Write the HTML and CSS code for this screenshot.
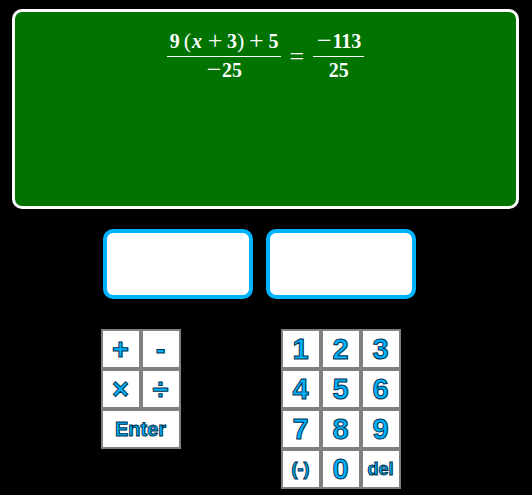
FILE: index.html
```html
<!DOCTYPE html>
<html lang="en">
<head>
<meta charset="utf-8">
<title>Equation practice</title>
<link rel="stylesheet" href="styles.css">
</head>
<body>
<main class="app">
  <section class="board" aria-label="Equation">
    <div class="equation">
      <span class="fraction">
        <span class="numerator">9<span class="paren open">(</span><i class="variable">x</i><span class="op">+</span>3<span class="paren">)</span><span class="op">+</span>5</span>
        <span class="denominator"><span class="sign">−</span>25</span>
      </span>
      <span class="equals">=</span>
      <span class="fraction">
        <span class="numerator"><span class="sign">−</span>113</span>
        <span class="denominator">25</span>
      </span>
    </div>
  </section>
  <div class="answers">
    <input class="answer" type="text" aria-label="Left side">
    <input class="answer" type="text" aria-label="Right side">
  </div>
  <div class="pads">
    <div class="pad operators">
      <button class="key" type="button">+</button>
      <button class="key" type="button">-</button>
      <button class="key" type="button">×</button>
      <button class="key" type="button">÷</button>
      <button class="key enter" type="button">Enter</button>
    </div>
    <div class="pad digits">
      <button class="key" type="button">1</button>
      <button class="key" type="button">2</button>
      <button class="key" type="button">3</button>
      <button class="key" type="button">4</button>
      <button class="key" type="button">5</button>
      <button class="key" type="button">6</button>
      <button class="key" type="button">7</button>
      <button class="key" type="button">8</button>
      <button class="key" type="button">9</button>
      <button class="key word" type="button">(-)</button>
      <button class="key" type="button">0</button>
      <button class="key word" type="button">del</button>
    </div>
  </div>
</main>
</body>
</html>
```
FILE: styles.css
```css
* {
  box-sizing: border-box;
}

body {
  margin: 0;
  background: #000;
  font-family: "Liberation Sans", Arial, sans-serif;
}

.app {
  padding: 9px 13px 6px 12px;
}

.board {
  min-height: 200px;
  padding: 17px 12px;
  border: 3px solid #fff;
  border-radius: 10px;
  background: #007300;
  color: #fff;
}

.equation {
  display: flex;
  justify-content: center;
  align-items: center;
  gap: 8px;
  font: bold 20px/24px "Liberation Serif", "Times New Roman", serif;
}

.fraction {
  display: flex;
  flex-direction: column;
  text-align: center;
}

.numerator,
.denominator {
  display: flex;
  justify-content: center;
  height: 28px;
  padding: 0 3px;
}

.numerator {
  border-bottom: 1px solid #fff;
}

.denominator {
  padding-top: 1px;
}

.paren {
  font-weight: normal;
  font-size: 22px;
}

.open {
  margin-left: 4px;
}

.variable {
  padding: 0 1px;
}

.op,
.sign,
.equals {
  width: 24px;
  font-weight: normal;
  font-size: 26px;
}

.sign,
.equals {
  width: 16px;
}

.answers {
  display: flex;
  justify-content: center;
  gap: 13px;
  margin-top: 20px;
  padding-right: 12px;
}

.answer {
  width: 150px;
  height: 70px;
  padding: 4px 8px;
  border: 4px solid #00b3ff;
  border-radius: 10px;
  background: #fff;
  font: bold 28px "Liberation Sans", Arial, sans-serif;
  text-align: center;
}

.pads {
  display: flex;
  justify-content: center;
  align-items: flex-start;
  gap: 100px;
  margin-top: 30px;
  padding-right: 29px;
}

.pad {
  display: grid;
  grid-auto-rows: 40px;
}

.operators {
  grid-template-columns: repeat(2, 40px);
}

.digits {
  grid-template-columns: repeat(3, 40px);
}

.key {
  padding: 0 1px 0 0;
  border: 2px solid #808080;
  background: #fff;
  color: #00b3ff;
  font: bold 29px/36px "Liberation Sans", Arial, sans-serif;
  -webkit-text-stroke: 1px #00304a;
}

.enter {
  grid-column: span 2;
  font-size: 20px;
}

.word {
  font-size: 18px;
}
```
